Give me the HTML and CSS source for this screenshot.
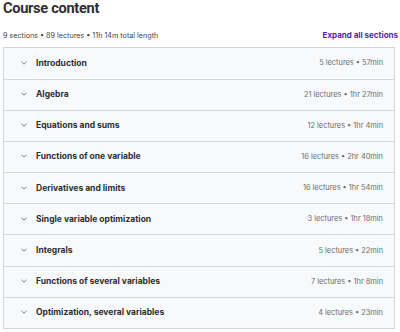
FILE: index.html
```html
<!DOCTYPE html>
<html lang="en">
<head>
  <meta charset="UTF-8" />
  <title>Course content</title>
  <link rel="stylesheet" href="styles.css">
</head>
<body>
  <div class="course">
    <h2 class="title">Course content</h2>
    <div class="meta">
      <span>9 sections • 89 lectures • 11h 14m total length</span>
      <a class="expand" href="#">Expand all sections</a>
    </div>
    <div class="sections">
      <div class="section"><span class="chev"><svg viewBox="0 0 6 4" width="6" height="4"><path d="M0.5 0.8l2.5 2.4 2.5-2.4" fill="none" stroke="#6a6f73" stroke-width="0.9"/></svg></span><span class="name">Introduction</span><span class="info">5 lectures • 57min</span></div>
      <div class="section"><span class="chev"><svg viewBox="0 0 6 4" width="6" height="4"><path d="M0.5 0.8l2.5 2.4 2.5-2.4" fill="none" stroke="#6a6f73" stroke-width="0.9"/></svg></span><span class="name">Algebra</span><span class="info">21 lectures • 1hr 27min</span></div>
      <div class="section"><span class="chev"><svg viewBox="0 0 6 4" width="6" height="4"><path d="M0.5 0.8l2.5 2.4 2.5-2.4" fill="none" stroke="#6a6f73" stroke-width="0.9"/></svg></span><span class="name">Equations and sums</span><span class="info">12 lectures • 1hr 4min</span></div>
      <div class="section"><span class="chev"><svg viewBox="0 0 6 4" width="6" height="4"><path d="M0.5 0.8l2.5 2.4 2.5-2.4" fill="none" stroke="#6a6f73" stroke-width="0.9"/></svg></span><span class="name">Functions of one variable</span><span class="info">16 lectures • 2hr 40min</span></div>
      <div class="section"><span class="chev"><svg viewBox="0 0 6 4" width="6" height="4"><path d="M0.5 0.8l2.5 2.4 2.5-2.4" fill="none" stroke="#6a6f73" stroke-width="0.9"/></svg></span><span class="name">Derivatives and limits</span><span class="info">16 lectures • 1hr 54min</span></div>
      <div class="section"><span class="chev"><svg viewBox="0 0 6 4" width="6" height="4"><path d="M0.5 0.8l2.5 2.4 2.5-2.4" fill="none" stroke="#6a6f73" stroke-width="0.9"/></svg></span><span class="name">Single variable optimization</span><span class="info">3 lectures • 1hr 18min</span></div>
      <div class="section"><span class="chev"><svg viewBox="0 0 6 4" width="6" height="4"><path d="M0.5 0.8l2.5 2.4 2.5-2.4" fill="none" stroke="#6a6f73" stroke-width="0.9"/></svg></span><span class="name">Integrals</span><span class="info">5 lectures • 22min</span></div>
      <div class="section"><span class="chev"><svg viewBox="0 0 6 4" width="6" height="4"><path d="M0.5 0.8l2.5 2.4 2.5-2.4" fill="none" stroke="#6a6f73" stroke-width="0.9"/></svg></span><span class="name">Functions of several variables</span><span class="info">7 lectures • 1hr 8min</span></div>
      <div class="section"><span class="chev"><svg viewBox="0 0 6 4" width="6" height="4"><path d="M0.5 0.8l2.5 2.4 2.5-2.4" fill="none" stroke="#6a6f73" stroke-width="0.9"/></svg></span><span class="name">Optimization, several variables</span><span class="info">4 lectures • 23min</span></div>
    </div>
  </div>
</body>
</html>
```

FILE: styles.css
```css
* {
  box-sizing: border-box;
}

body {
  margin: 0;
  background: #fff;
  font-family: 'Inter', 'Noto Sans', sans-serif;
  color: #2d2f31;
}

.course {
  padding: 0 5px 0 3px;
}

.title {
  margin: 0;
  font-family: 'Roboto', 'Inter', sans-serif;
  font-size: 14.6px;
  line-height: 17px;
  font-weight: 700;
  letter-spacing: -0.3px;
}

.meta {
  display: flex;
  justify-content: space-between;
  align-items: center;
  margin-top: 12px;
  height: 12px;
  font-size: 7.2px;
  color: #3d3f41;
}

.expand {
  color: #5022c3;
  font-weight: 700;
  font-size: 8px;
  text-decoration: none;
  margin-right: -3px;
}

.sections {
  margin-top: 6px;
  border: 1px solid #d1d7dc;
  background: #f7f9fa;
}

.section {
  display: flex;
  align-items: center;
  height: 31.2px;
  border-top: 1px solid #d1d7dc;
  padding: 0 11px 1px 17px;
}

.section:first-child {
  border-top: none;
  height: 30.5px;
}

.chev {
  display: flex;
  width: 15px;
}

.name {
  flex: 1;
  font-size: 8.5px;
  font-weight: 700;
}

.info {
  font-size: 7.4px;
  color: #6a6f73;
}
```
